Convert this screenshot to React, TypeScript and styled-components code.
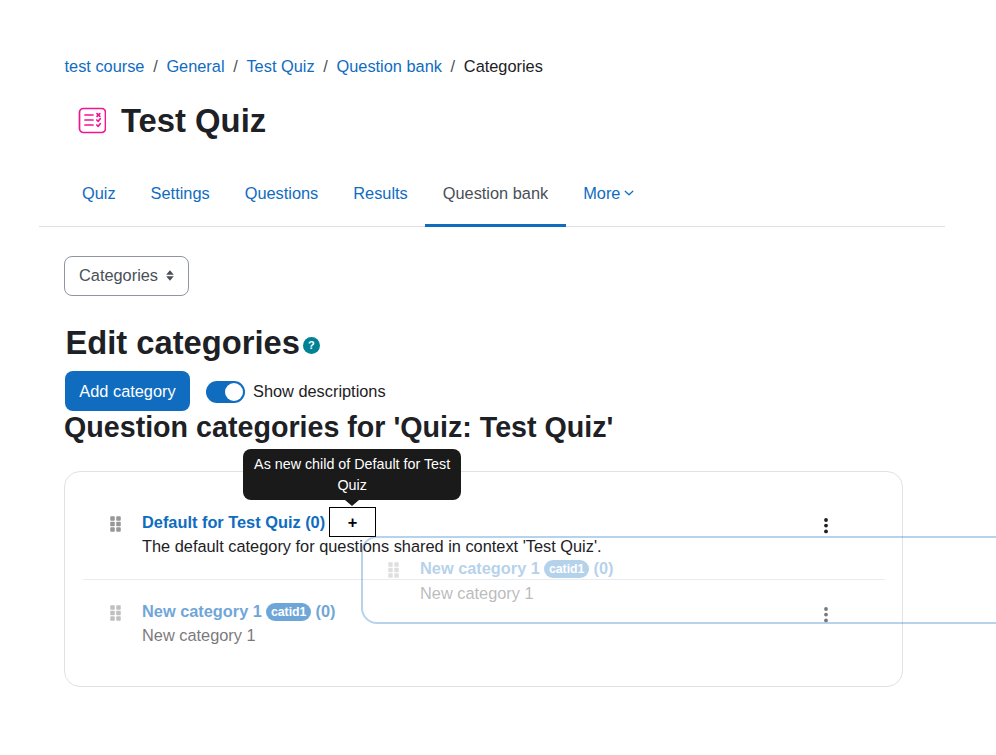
import React from "react";
import styled, { createGlobalStyle } from "styled-components";

const GlobalStyle = createGlobalStyle`
  html, body {
    margin: 0;
    padding: 0;
    background: #fff;
    overflow: hidden;
  }
  body {
    font-family: "Liberation Sans", Arial, sans-serif;
    font-size: 16.35px;
    line-height: 24px;
    color: #1d2125;
  }
`;

const crumbs = ["test course", "General", "Test Quiz", "Question bank"];
const tabs = ["Quiz", "Settings", "Questions", "Results", "Question bank"];

function QuizIcon() {
  return (
    <svg width="28" height="28" viewBox="0 0 28 28" fill="none" stroke="#f5138f" strokeWidth="1.7" strokeLinecap="round" strokeLinejoin="round">
      <rect x="1.5" y="1.5" width="26" height="24" rx="4" />
      <path d="M7 8h8M7 13h8M7 18h8" />
      <path d="M19 6.6l2.8 2.8M21.8 6.6L19 9.4" />
      <path d="M18.8 13l1.4 1.3 2-2.6" />
      <path d="M18.8 18l1.4 1.3 2-2.6" />
    </svg>
  );
}

function GripIcon() {
  return (
    <svg width="11" height="16" viewBox="0 0 11 16" fill="#979797">
      <rect x="0.25" y="0.3" width="4.5" height="4.4" rx="0.8" />
      <rect x="6.25" y="0.3" width="4.5" height="4.4" rx="0.8" />
      <rect x="0.25" y="5.8" width="4.5" height="4.4" rx="0.8" />
      <rect x="6.25" y="5.8" width="4.5" height="4.4" rx="0.8" />
      <rect x="0.25" y="11.3" width="4.5" height="4.4" rx="0.8" />
      <rect x="6.25" y="11.3" width="4.5" height="4.4" rx="0.8" />
    </svg>
  );
}

function KebabIcon() {
  return (
    <svg width="4" height="16" viewBox="0 0 4 16" fill="#1d2125">
      <circle cx="2" cy="2" r="1.9" />
      <circle cx="2" cy="7.6" r="1.9" />
      <circle cx="2" cy="13.4" r="1.9" />
    </svg>
  );
}

function App() {
  return (
    <Page>
      <GlobalStyle />
      <Breadcrumb>
        {crumbs.map(c => (
          <React.Fragment key={c}>
            <Crumb href="#">{c}</Crumb>
            <Slash>/</Slash>
          </React.Fragment>
        ))}
        <span>Categories</span>
      </Breadcrumb>
      <Header>
        <IconBox>
          <QuizIcon />
        </IconBox>
        <PageTitle>Test Quiz</PageTitle>
      </Header>
      <Tabs>
        {tabs.map(t => (
          <Tab key={t} $active={t === "Question bank"}>
            {t}
          </Tab>
        ))}
        <Tab>
          More
          <svg width="10" height="6" viewBox="0 0 10 6" fill="none" stroke="#0f6cbf" strokeWidth="1.2" strokeLinecap="round" strokeLinejoin="round">
            <path d="M1.2 1.2L5 4.8l3.8-3.6" />
          </svg>
        </Tab>
      </Tabs>
      <Content>
        <SelectBox>
          Categories
          <svg width="9" height="13" viewBox="0 0 9 13" fill="#495057">
            <path d="M4.5 0.5L8.8 5.6H0.2zM4.5 12.5L0.2 7.4H8.8z" />
          </svg>
        </SelectBox>
        <EditHeading>
          Edit categories
          <HelpBadge>?</HelpBadge>
        </EditHeading>
        <ActionRow>
          <AddButton>Add category</AddButton>
          <Toggle />
          <ToggleLabel>Show descriptions</ToggleLabel>
        </ActionRow>
        <SectionHeading>Question categories for 'Quiz: Test Quiz'</SectionHeading>
        <Card>
          <Row>
            <GripCell>
              <GripIcon />
            </GripCell>
            <RowBody>
              <RowTitle>
                <TitleLink>Default for Test Quiz (0)</TitleLink>
                <PlusBox>
                  +
                  <Tooltip>As new child of Default for Test Quiz</Tooltip>
                </PlusBox>
              </RowTitle>
              <RowText>The default category for questions shared in context 'Test Quiz'.</RowText>
            </RowBody>
            <KebabCell>
              <KebabIcon />
            </KebabCell>
          </Row>
          <Row $faded>
            <GripCell>
              <GripIcon />
            </GripCell>
            <RowBody>
              <RowTitle>
                <TitleLink>New category 1</TitleLink>
                <IdBadge>catid1</IdBadge>
                <TitleLink>(0)</TitleLink>
              </RowTitle>
              <RowText>New category 1</RowText>
            </RowBody>
            <KebabCell>
              <KebabIcon />
            </KebabCell>
          </Row>
        </Card>
        <DragGhost>
          <GripCell>
            <GripIcon />
          </GripCell>
          <RowBody>
            <RowTitle>
              <TitleLink>New category 1</TitleLink>
              <IdBadge>catid1</IdBadge>
              <TitleLink>(0)</TitleLink>
            </RowTitle>
            <GhostText>New category 1</GhostText>
          </RowBody>
        </DragGhost>
      </Content>
    </Page>
  );
}

const Page = styled.div`
  position: relative;
  width: 996px;
  height: 755px;
  overflow: hidden;
  padding: 54px 51px 0 39px;
  box-sizing: border-box;
`;

const Breadcrumb = styled.nav`
  display: flex;
  align-items: center;
  height: 24px;
  padding-left: 25.5px;
`;

const Crumb = styled.a`
  color: #0f6cbf;
  text-decoration: none;
`;

const Slash = styled.span`
  color: #495057;
  padding: 0 8.7px;
`;

const Header = styled.div`
  display: flex;
  align-items: center;
  height: 48px;
  margin-top: 19px;
  padding-left: 39px;
`;

const IconBox = styled.div`
  display: flex;
  width: 28px;
  height: 28px;
  margin-right: 15px;
`;

const PageTitle = styled.h1`
  margin: 0;
  font-size: 32.8px;
  line-height: 38px;
  font-weight: 700;
`;

const Tabs = styled.div`
  display: flex;
  height: 57px;
  margin-top: 24px;
  border-bottom: 1px solid #dee2e6;
  padding-left: 25.5px;
`;

const Tab = styled.div<{ $active?: boolean }>`
  display: flex;
  align-items: center;
  gap: 4px;
  height: 58px;
  padding: 0 17.5px 7px;
  box-sizing: border-box;
  color: ${p => (p.$active ? "#495057" : "#0f6cbf")};
  border-bottom: 3px solid ${p => (p.$active ? "#0f6cbf" : "transparent")};
`;

const Content = styled.div`
  padding: 29px 0 0 25px;
`;

const SelectBox = styled.div`
  display: flex;
  align-items: center;
  gap: 8px;
  height: 40px;
  box-sizing: border-box;
  width: 125px;
  padding: 0 14px 2px;
  color: #495057;
  border: 1px solid #8f959e;
  border-radius: 8px;
`;

const EditHeading = styled.h2`
  display: flex;
  align-items: center;
  margin: 28px 0 0 1.5px;
  font-size: 32.7px;
  line-height: 38px;
  font-weight: 700;
`;

const HelpBadge = styled.span`
  display: inline-flex;
  align-items: center;
  justify-content: center;
  width: 17px;
  height: 17px;
  margin: 4px 0 0 3px;
  border-radius: 50%;
  background: #008196;
  color: #fff;
  font-size: 11px;
  line-height: 17px;
  font-weight: 700;
`;

const ActionRow = styled.div`
  display: flex;
  align-items: center;
  margin: 9px 0 0 1px;
`;

const AddButton = styled.div`
  display: flex;
  align-items: center;
  justify-content: center;
  width: 125px;
  height: 40px;
  padding-bottom: 1px;
  box-sizing: border-box;
  background: #0f6cbf;
  color: #fff;
  border-radius: 8px;
`;

const Toggle = styled.div`
  position: relative;
  width: 39px;
  height: 22px;
  margin: 1px 0 0 16px;
  border-radius: 11px;
  background: #0f6cbf;

  &::after {
    content: "";
    position: absolute;
    top: 2px;
    right: 2px;
    width: 18px;
    height: 18px;
    border-radius: 50%;
    background: #fff;
  }
`;

const ToggleLabel = styled.span`
  margin: 0 0 0 8px;
`;

const SectionHeading = styled.h3`
  margin: 0;
  font-size: 28.65px;
  line-height: 33px;
  font-weight: 700;
`;

const Card = styled.div`
  width: 839px;
  height: 216px;
  margin-top: 27px;
  padding: 13px 17px 0 18px;
  box-sizing: border-box;
  border: 1px solid #dee2e6;
  border-radius: 16px;
`;

const Row = styled.div<{ $faded?: boolean }>`
  display: flex;
  padding: 25px 0 0 26px;
  height: 94px;
  box-sizing: border-box;

  ${p =>
    p.$faded &&
    `
    border-top: 1px solid #e9ecef;
    padding-top: 19px;
    & > * { opacity: 0.6; }
  `}
`;

const GripCell = styled.div`
  width: 33px;
  flex: none;
  box-sizing: border-box;
  padding: 4px 0 0 1px;
`;

const RowBody = styled.div`
  flex: 1;
`;

const RowTitle = styled.div`
  display: flex;
  align-items: center;
  gap: 4px;
  height: 24px;
`;

const TitleLink = styled.span`
  color: #0f6cbf;
  font-weight: 700;
`;

const RowText = styled.div``;

const GhostText = styled.div`
  padding-top: 1px;
`;

const KebabCell = styled.div`
  width: 4px;
  margin-right: 57px;
  padding-top: 6px;
`;

const PlusBox = styled.div`
  position: relative;
  flex: none;
  display: flex;
  align-items: center;
  justify-content: center;
  width: 47px;
  height: 30px;
  box-sizing: border-box;
  border: 1px solid #000;
  font-weight: 700;
  color: #000;
`;

const Tooltip = styled.div`
  position: absolute;
  left: -87px;
  bottom: 36px;
  width: 218px;
  padding: 4.5px 8px;
  box-sizing: border-box;
  background: #1a1a1a;
  color: #fff;
  border-radius: 8px;
  font-size: 14.3px;
  line-height: 21px;
  font-weight: 400;
  text-align: center;

  &::after {
    content: "";
    position: absolute;
    left: 50%;
    bottom: -6px;
    margin-left: -7px;
    border-style: solid;
    border-width: 6px 7px 0;
    border-color: #1a1a1a transparent transparent;
  }
`;

const IdBadge = styled.span`
  display: inline-flex;
  align-items: center;
  height: 18px;
  margin-top: 1px;
  padding: 0 5px;
  background: #0f6cbf;
  color: #fff;
  border-radius: 9px;
  font-size: 12.3px;
  font-weight: 700;
`;

const DragGhost = styled.div`
  position: absolute;
  left: 361px;
  top: 536px;
  width: 700px;
  height: 88px;
  box-sizing: border-box;
  display: flex;
  padding: 18px 0 0 24px;
  border: 2px solid rgba(15, 108, 191, 0.3);
  border-radius: 16px;

  & > * {
    opacity: 0.3;
  }
`;

export default App;
